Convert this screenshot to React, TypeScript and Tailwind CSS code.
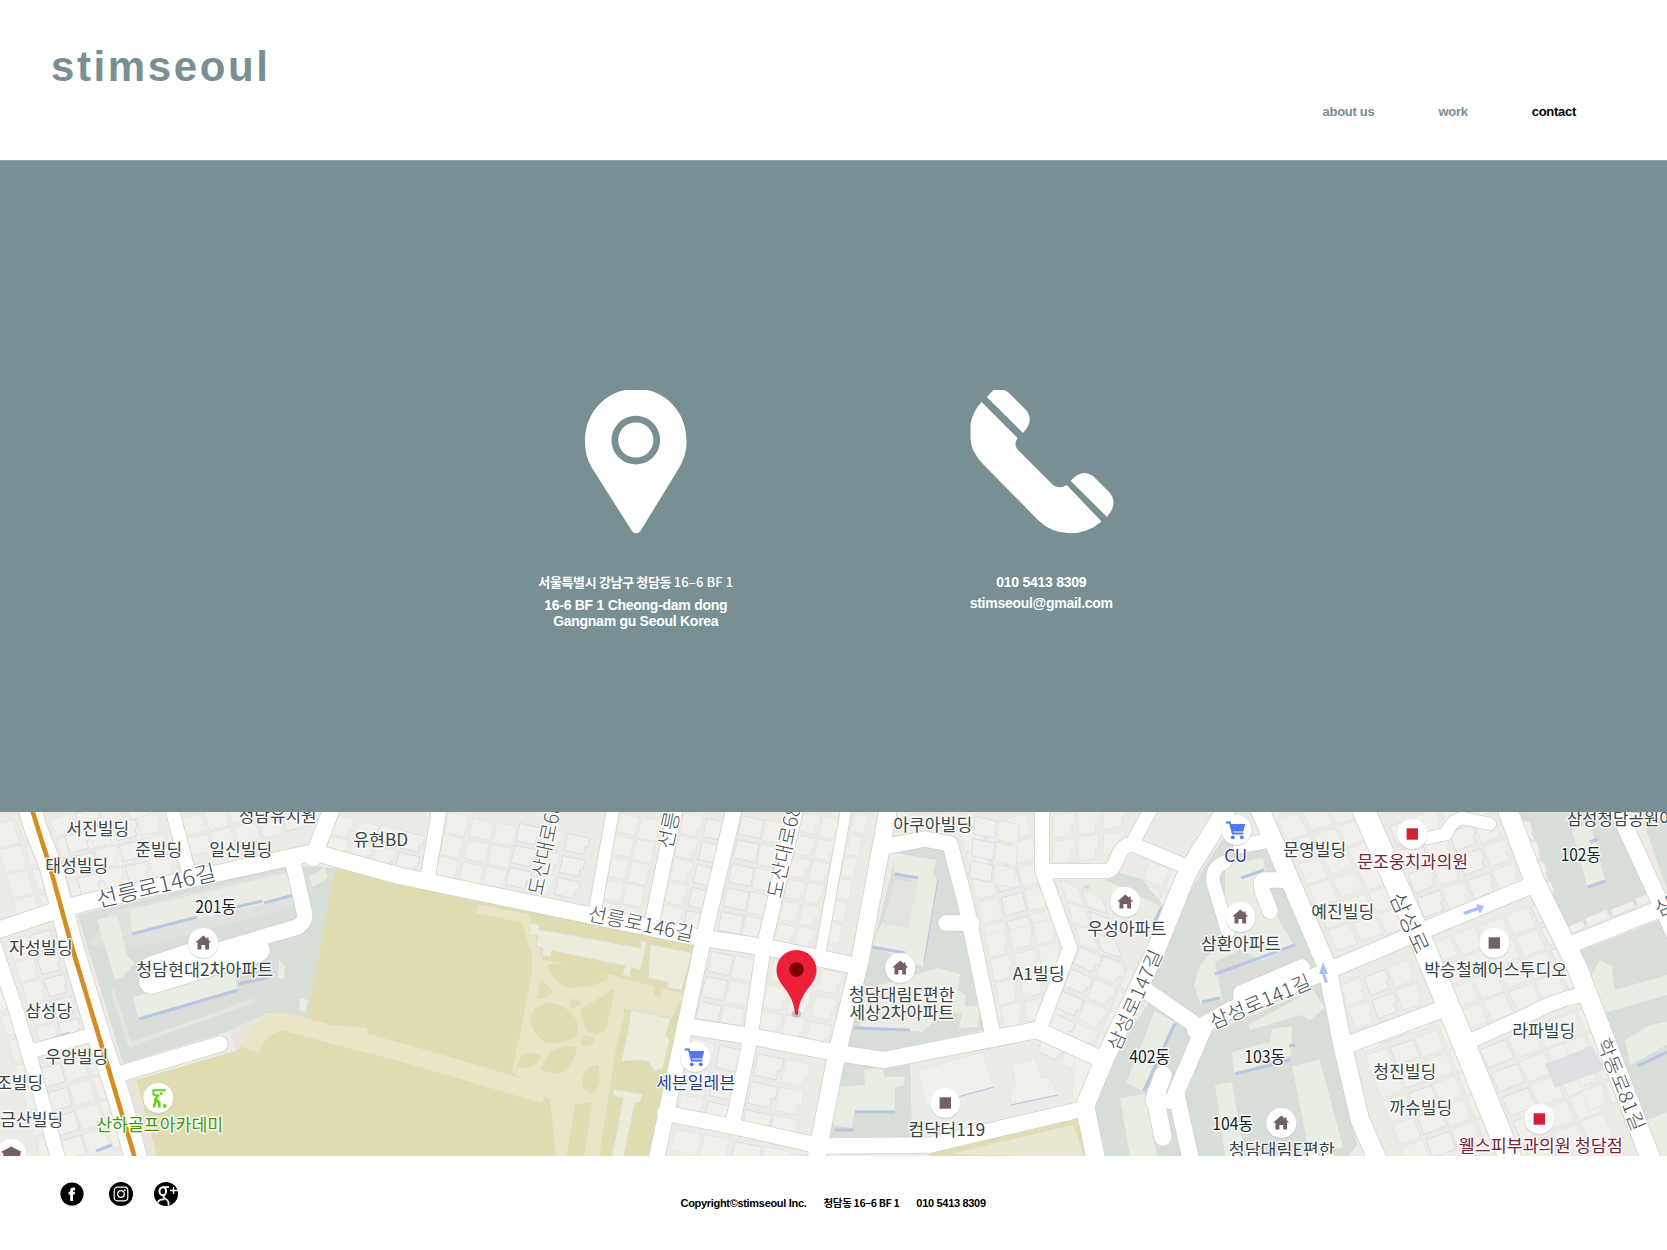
import React from 'react';

const SANS = 'font-["Liberation_Sans","Noto_Sans_CJK_KR",sans-serif]';

/* Road segments: path, width */
const roads: [string, number][] = [
  ['M27 800 L36 829 L51 867 L72 947 L100 1040 L120 1100 L138 1165', 22],
  ['M-5 931 L60 909 L100 899 L306 854 Q314 852 320 854 L400 876 L690 936 L770 948 L852 965', 16],
  ['M171 805 L188 870', 13],
  ['M333 805 L313 858', 16],
  ['M440 805 L428 876', 14],
  ['M614 805 L595 910', 12],
  ['M676 805 L652 922', 14],
  ['M735 805 L702 945 L683 1035 L655 1165', 15],
  ['M797 805 L763 950 L750 1040 L733 1122', 14],
  ['M847 805 L820 955', 10],
  ['M889 805 L860 960 L837 1053 L815 1165', 17],
  ['M685 1026 L750 1036 L837 1053 L884 1060 L1037 1030 L1103 1060', 16],
  ['M665 1113 L740 1128 L820 1146 L930 1145 L1087 1108', 15],
  ['M888 846 L925 839 L950 844 L966 905 L993 1036', 15],
  ['M946 923 L972 923', 15],
  ['M1042 805 L1042 870 L1070 948 L1040 1028', 14],
  ['M1045 871 L1108 871 Q1113 870 1117 859 Q1122 845 1132 844 L1187 867', 14],
  ['M1132 844 L1153 805', 13],
  ['M1229 805 L1187 873 L1153 957 L1105 1058 L1085 1106 L1097 1165', 18],
  ['M1148 992 L1203 1030 L1176 1093 L1192 1165', 16],
  ['M1163 1075 L1155 1097 L1163 1137', 17],
  ['M1153 1101 L1178 1101', 15],
  ['M1195 1030 L1230 1010 L1325 972 L1424 930 L1535 884', 16],
  ['M1258 805 L1327 967 L1343 1047 L1360 1120 L1382 1170', 18],
  ['M1359 800 L1424 947 L1457 1027 L1513 1165', 22],
  ['M1504 800 L1534 880 L1577 967 L1653 1165', 19],
  ['M1567 946 L1675 903', 16],
  ['M1613 800 L1675 935', 16],
  ['M1347 1045 L1440 1010', 16],
  ['M1468 1042 L1530 1014 Q1553 1001 1577 996', 14],
  ['M1225 862 Q1211 868 1213 882 L1228 932', 13],
  ['M1240 846 L1272 840', 14],
  ['M1284 880 L1264 880 Q1260 882 1262 890 L1270 911', 15],
  ['M1241 998 L1241 993 L1302 967', 15],
  ['M152 968 L206 950 M151 982 L258 950 M152 972 L210 962', 23],
  ['M206 954 L297 927 Q307 922 304 911 L292 858', 15],
  ['M112 1076 L220 1044', 15],
  ['M-6 945 L16 1010 L32 1065 L60 1165', 14],
  ['M28 1052 L95 1034', 13],
  ['M1428 838 L1446 834 Q1452 820 1462 818 L1490 824', 12],
];

const sandPaths = ['M250 1050 Q262 1021 285 1022 L400 1052 Q470 1072 545 1095', 'M282 1024 L367 1031', 'M477 909 L525 918 L537 955 L536 975 L520 1060', 'M540 963 L610 980 L690 1000', 'M612 978 L620 1015 L605 1070 L592 1165', 'M540 975 L560 1000 L610 985', 'M525 1040 L550 1000 L600 1050', 'M520 1066 L580 1038', 'M550 1065 L590 1020', 'M560 1165 L565 1090 L520 1075'];

const zones: string[] = [
  'M78 915 L290 866 L335 868 L307 1017 L267 1013 L233 1030 L123 1063 Z',
  'M897 852 L925 847 L947 852 L984 1030 L883 1052 L845 1046 L872 950 Z',
  'M840 1063 L910 1063 L912 1137 L827 1137 Z',
  'M1083 887 L1117 872 L1142 880 L1163 905 L1150 917 Z',
  'M1222 840 L1262 838 L1327 985 L1203 1022 L1135 985 L1163 935 Z',
  'M1110 1064 L1150 1000 L1205 1035 L1325 985 L1357 1145 L1345 1160 L1100 1160 L1093 1106 Z',
  'M1513 835 L1517 812 L1620 812 L1657 897 L1564 933 L1537 866 Z',
  'M1575 953 L1667 917 L1667 1160 L1643 1160 L1587 985 Z',
  'M1640 812 L1667 812 L1667 890 Z',
];

/* Apartment blocks */
const greens: string[] = [
  'M130 910 L290 872 L295 897 L132 933 Z', 'M97 920 L117 915 L128 957 L135 963 L123 977 L115 980 Z',
  'M133 997 L233 970 L238 990 L138 1018 Z', 'M279 960 L285 966 L284 979 L278 978 Z', 'M309 877 L325 867 L328 878 L312 887 Z', 'M300 998 L308 1000 L305 1012 L299 1010 Z',
  'M895 853 L937 860 L933 873 L938 880 L923 967 L872 947 L882 922 L905 927 L918 882 L894 873 Z',
  'M938 968 L960 974 L958 990 L966 995 L964 1015 L945 1010 L935 1020 L922 1032 L860 1026 L865 990 Z', 'M963 1007 L980 1005 L978 1027 L959 1028 Z',
  'M836 1087 L865 1085 L864 1070 L882 1068 L885 1077 L905 1077 L904 1085 L895 1088 L895 1113 L855 1110 L852 1128 L832 1125 Z',
  'M1090 880 L1100 877 L1162 907 L1153 925 L1088 893 Z',
  'M1225 865 L1263 858 L1270 905 L1295 947 L1262 960 L1240 950 L1215 962 L1222 1000 L1200 1003 L1194 985 L1200 965 L1225 935 Z',
  'M1155 1011 L1176 1023 L1142 1091 L1126 1083 Z', 'M1120 1098 L1145 1094 L1157 1156 L1130 1156 Z',
  'M1232 1052 L1270 1042 L1272 1029 L1292 1026 L1291 1055 L1234 1074 Z', 'M1292 1066 L1320 1060 L1343 1147 L1310 1156 Z', 'M1215 1085 L1232 1082 L1245 1156 L1225 1156 Z',
  'M1572 830 L1590 823 L1605 880 L1588 889 Z', 'M1248 1025 L1313 990 L1325 1008 L1310 1020 L1300 1015 L1250 1030 Z',
  'M1588 982 L1600 960 L1612 966 L1615 990 L1667 975 L1667 995 L1597 1015 Z', 'M1625 1040 L1650 1025 L1667 1022 L1667 1045 L1630 1065 Z', 'M1635 1125 L1667 1112 L1667 1156 L1645 1156 Z',
];

const blueLines: string[] = [
  'M132 934 L197 917 M237 907 L262 901 M264 903 L294 895', 'M139 1019 L238 990 M238 984 L270 977', 'M895 874 L918 878',
  'M872 947 L905 953', 'M855 1112 L895 1112', 'M854 1028 L910 1030', 'M1162 907 L1153 925', 'M1215 974 L1295 945 M1202 1002 L1220 998', 'M1175 1023 L1144 1091',
  'M1235 1074 L1290 1060 M1289 1046 L1295 1045', 'M1241 878 L1264 870', 'M1588 887 L1605 881 M1590 842 L1598 839', 'M835 1130 L854 1130', 'M1638 1066 L1667 1052', 'M50 1040 L70 1033', 'M96 1151 L112 1145',
];

/* Sports field structures */
const campus: string[] = [
  'M530 923 L540 925 L539 929 L641 948 L640 941 L647 942 L641 970 L631 968 L630 977 L622 975 L625 966 L552 951 L550 957 L542 955 L543 949 L536 946 L538 936 L529 935 Z',
  'M650 944 L692 953 L682 990 L668 988 L668 982 L648 978 Z',
  'M631 1010 L671 1018 L666 1035 L670 1040 L663 1068 L655 1072 L648 1062 L637 1060 L621 1062 L628 1030 Z',
  'M613 1089 L643 1094 L640 1103 L635 1103 L622 1165 L610 1165 L623 1098 L614 1096 Z',
];
const lawns: string[] = [
  'M547 965 Q565 960 610 977 Q600 987 570 988 Q555 985 547 965 Z', 'M540 980 Q546 982 553 992 Q545 1000 537 998 Z', 'M535 1008 Q550 998 565 1008 Q582 1020 577 1035 Q565 1046 545 1043 Q530 1030 530 1018 Z',
  'M580 1010 L615 988 L606 1030 Q595 1038 586 1030 Z', 'M520 1058 Q530 1048 541 1056 Q537 1070 516 1068 Z', 'M550 1052 Q565 1043 577 1048 Q572 1070 558 1074 L540 1070 Z', 'M582 1082 Q585 1065 598 1065 Q603 1085 592 1094 Q582 1092 582 1082 Z', 'M570 1000 Q577 997 581 1002 Q577 1010 570 1007 Z', 'M583 1036 Q590 1034 595 1040 Q590 1048 581 1045 Z', 'M575 1104 L592 1103 L583 1165 L565 1165 Z', 'M653 985 L661 987 L661 998 L654 995 Z',
];

/* Low-rise building rows: [x, y, column vector, row vector, columns, rows] */
const rows: [number, number, number, number, number, number, number, number][] = [
  [449, 812, 24, 5, -5, 22, 3, 3], [520, 822, 24, 5, -5, 22, 3, 4], [620, 812, 22, 5, -5, 22, 2, 5],
  [684, 812, 23, 5, -5, 23, 2, 5], [742, 814, 24, 5, -5, 24, 2, 5], [803, 812, 20, 4, -5, 22, 2, 6], [855, 812, 15, 3, -5, 22, 1, 6],
  [335, 815, 23, 5, -5, 21, 4, 3], [712, 950, 24, 5, -6, 25, 2, 3], [774, 958, 24, 5, -6, 26, 3, 3],
  [693, 1038, 27, 6, -6, 28, 2, 3], [758, 1052, 28, 6, -6, 28, 2, 3], [675, 1128, 30, 6, -6, 25, 5, 2],
  [50, 818, 25, -6, 6, 21, 4, 4], [-8, 825, 26, -6, 7, 25, 2, 4], [65, 835, 24, -6, 6, 21, 4, 3], [180, 818, 24, -6, 6, 20, 5, 2],
  [8, 940, 22, -6, 7, 22, 2, 5], [38, 1068, 24, -7, 7, 24, 3, 4], [-6, 990, 14, -4, 7, 25, 1, 7],
  [960, 830, 23, -6, 6, 24, 3, 5], [985, 935, 24, -6, 5, 24, 3, 4], [975, 815, 24, 5, -2, 22, 2, 3], [1053, 815, 25, -4, 0, 26, 3, 2],
  [1060, 880, 22, 8, 7, 22, 2, 4], [1080, 945, 24, 11, -9, 22, 3, 5], [1150, 860, 22, 9, -9, 22, 2, 2], [1145, 945, 20, 10, -8, 18, 2, 3],
  [1278, 820, 25, -8, 10, 22, 3, 6], [1390, 825, 25, -9, 9, 24, 4, 4],
  [1427, 945, 26, -10, 10, 22, 5, 4], [1340, 985, 24, -9, 8, 23, 3, 3], [1480, 1048, 28, -11, 11, 24, 3, 5],
  [1555, 1018, 22, -8, 9, 24, 2, 4], [1365, 1055, 25, -9, 9, 23, 4, 5], [1515, 818, 18, 5, 7, 20, 1, 4], [1560, 928, 25, -10, 4, 9, 4, 1],
];

function BuildingRow({ row, n }: { row: (typeof rows)[number]; n: number }) {
  const [x, y, ux, uy, vx, vy, cols, count] = row;
  const out = [];
  for (let r = 0; r < count; r++) {
    for (let c = 0; c < cols; c++) {
      const k = ((r * 7 + c * 11 + n * 5) % 7) / 7;
      const a = 0.82 + k * 0.12;
      const b = 0.93 - k * 0.2;
      const notch = 0.12 * (n % 2);
      const px = x + ux * c + vx * r;
      const py = y + uy * c + vy * r + k * 2;
      const d = `M${px} ${py} l${ux * a} ${uy * a} l${vx * b * 0.55} ${vy * b * 0.55} l${-ux * notch} ${-uy * notch} l${vx * b * 0.45} ${vy * b * 0.45} l${-ux * (a - notch)} ${-uy * (a - notch)} Z`;
      out.push(<path key={`${r}-${c}`} d={d} fill="#f1f0ea" stroke={k > 0.7 ? '#d2d9ea' : '#e3e4de'} strokeWidth="0.8" />);
    }
  }
  return <g>{out}</g>;
}

/* Labels: text, centre x, baseline y, width, colour, rotation, size */
const labels: [string, number, number, number, string?, number?, number?][] = [
  ['서진빌딩', 97, 834, 63], ['준빌딩', 158, 855, 47], ['일신빌딩', 240, 855, 63], ['청담유치원', 277, 821, 78], ['유현BD', 380, 845, 55],
  ['태성빌딩', 76, 871, 63], ['자성빌딩', 40, 953, 64], ['청담현대2차아파트', 204, 975, 137], ['삼성당', 48, 1016, 47],
  ['우암빌딩', 76, 1062, 63], ['조빌딩', 19, 1088, 47], ['금산빌딩', 31, 1125, 63], ['201동', 215, 912, 41, '#14201f'],
  ['산하골프아카데미', 159, 1130, 127, '#3d9a0c'], ['세븐일레븐', 695, 1088, 79, '#2b3f95'], ['아쿠아빌딩', 932, 830, 79], ['A1빌딩', 1038, 979, 52],
  ['청담대림E편한', 901, 1000, 106], ['세상2차아파트', 901, 1018, 105], ['컴닥터119', 946, 1135, 77], ['우성아파트', 1126, 934, 79],
  ['삼환아파트', 1240, 949, 80], ['CU', 1235, 861, 23, '#2b3f95'], ['문영빌딩', 1314, 855, 63], ['문조웅치과의원', 1412, 867, 111, '#74253d'],
  ['예진빌딩', 1342, 917, 63], ['박승철헤어스투디오', 1495, 975, 143], ['삼성청담공원아', 1620, 824, 108], ['102동', 1580, 860, 40, '#14201f'],
  ['라파빌딩', 1543, 1036, 63], ['청진빌딩', 1404, 1077, 63], ['까슈빌딩', 1420, 1113, 63], ['402동', 1149, 1062, 41, '#14201f'],
  ['103동', 1264, 1062, 41, '#14201f'], ['104동', 1232, 1129, 41, '#14201f'], ['청담대림E편한', 1281, 1155, 106], ['웰스피부과의원 청담점', 1540, 1151, 164, '#74253d'],
  ['선릉로146길', 157, 893, 122, '#465154', -13.5, 22], ['선릉로146길', 639, 930, 107, '#465154', 11.5, 20],
  ['도산대로68길', 553, 842, 112, '#465154', -78, 20], ['선릉로', 677, 823, 56, '#465154', -78, 20], ['도산대로68길', 792, 845, 112, '#465154', -78, 20],
  ['삼성로147길', 1140, 1003, 108, '#465154', -66, 19], ['삼성로141길', 1262, 1008, 108, '#465154', -23, 20],
  ['삼성로', 1403, 925, 65, '#465154', 65, 21], ['학동로81길', 1615, 1086, 98, '#465154', 68, 19], ['삼성로', 1684, 905, 58, '#465154', -23, 20],
];

function Label({ l }: { l: (typeof labels)[number] }) {
  const [t, x, y, w, color = '#344545', rot = 0, size = 17] = l;
  return (
    <text
      x={x + 0.7} y={y + 0.7} fontSize={size} fontWeight={rot ? 300 : 400} textAnchor="middle" textLength={w} lengthAdjust="spacingAndGlyphs" fill={color}
      stroke="#ffffff" strokeWidth="2.8" strokeOpacity="0.85" strokeLinejoin="round" paintOrder="stroke" transform={`rotate(${rot} ${x} ${y})`}
    >
      {t}
    </text>
  );
}

function Spot({ x, y, kind }: { x: number; y: number; kind: string }) {
  return (
    <g transform={`translate(${x} ${y})`}>
      <circle cy="1" r="15.3" fill="#b9bfc0" opacity="0.5" />
      <circle r="15" fill="#fff" />
      {kind === 'home' && <path d="M0 -7.5 L3.8 -4.200 V-5.500 H5.300 V-2.900 L8 -0.500 H5.800 V6.500 H1.900 V2 H-1.900 V6.500 H-5.800 V-0.500 H-8 Z" fill="#745f63" />}
      {kind === 'sq' && <rect x="-5.7" y="-5.7" width="11.4" height="11.4" fill="#745f63" />}
      {kind === 'red' && <rect x="-5.7" y="-5.7" width="11.4" height="11.4" fill="#d51f33" />}
      {kind === 'cart' && (
        <g>
          <path d="M-10.5 -7.5 H-6.5 L-3.5 3.5 H7" fill="none" stroke="#5277f5" strokeWidth="1.8" />
          <path d="M-6.5 -6 H9 L7 1.5 H-4.5 Z" fill="#5277f5" />
          <circle cx="-3.5" cy="7.3" r="1.9" fill="#5277f5" /><circle cx="5.5" cy="7.3" r="1.9" fill="#5277f5" />
        </g>
      )}
      {kind === 'golf' && (
        <g fill="none" stroke="#63d51c" strokeWidth="1.9">
          <path d="M7.5 -7.800 H-5 V-3.500 L-0.500 -2.500" />
          <path d="M0.500 -3.500 L-3 1.500 L1 4.500 V9.500 M-2.500 2 L-4.500 9.500" strokeWidth="2.6" />
          <circle cx="2.800" cy="-4.500" r="1.500" fill="#63d51c" stroke="none" /><circle cx="6.5" cy="8" r="1.9" fill="#63d51c" stroke="none" />
        </g>
      )}
      {kind === 'school' && <path d="M-10.500 -2 L0 -7.500 L10.500 -2 L0 3 Z M-8 -1 L0 3 L8 -1 V3 L0 7 L-8 3 Z M7.500 -1 h1.600 v7 h-1.600 z" fill="#745f63" />}
    </g>
  );
}

const spots: [number, number, string][] = [
  [203, 943, 'home'], [900, 968, 'home'], [1125, 902, 'home'], [1240, 917, 'home'], [1281, 1123, 'home'],
  [945, 1103, 'sq'], [1494, 943, 'sq'], [1412, 834, 'red'], [1539, 1119, 'red'], [695, 1057, 'cart'], [1236, 830, 'cart'], [158, 1098, 'golf'], [11, 1154, 'school'],
];

function StreetMap() {
  return (
    <svg className='block h-[344px] w-full shrink-0 font-["Noto_Sans_CJK_KR",sans-serif]' viewBox="0 812 1667 344" preserveAspectRatio="none">
      <rect x="0" y="812" width="1667" height="344" fill="#ecebe5" />
      {zones.map((d) => <path key={d} d={d} fill="#d7ddd7" />)}
      {rows.map((r, i) => <BuildingRow key={i} row={r} n={i} />)}
      {zones.slice(0, 6).map((d) => <path key={d} d={d} fill="#d7ddd7" />)}
      <path d="M90 945 L110 912 L290 868 L300 905 L150 945 Z" fill="#e3e6e0" opacity="0.6" />
      <path d="M112 990 L130 1045 L255 1000" fill="none" stroke="#e2e6e0" strokeWidth="4" />
      <path d="M335 868 L696 942 L650 1160 L155 1160 L135 1080 L236 1051 L268 1015 L307 1017 Z" fill="#dfdcb1" />
      <path d="M128 1080 L136 1078 L158 1160 L145 1160 Z M230 1030 L268 1013 L250 1040 L236 1051 Z" fill="#e9e5dc" />
      <g fill="none" stroke="#e8e4c8" strokeWidth="9">
        {sandPaths.map((d, i) => <path key={d} d={d} strokeWidth={i === 0 ? 18 : i === 1 ? 6 : 9} />)}
      </g>
      <path d="M535 965 L612 975 L680 1000 L672 1018 L622 1008 L598 1165 L557 1165 L550 1100 L512 1072 Z" fill="#e8e4c8" />
      {lawns.map((d) => <path key={d} d={d} fill="#dfdcb1" />)}
      {campus.map((d) => <path key={d} d={d} fill="#edebda" stroke="#d8dfd0" strokeWidth="1.2" />)}
      <path d="M930 1156 L1075 1122 L1088 1160 Z" fill="#e9e7d2" stroke="#dfdcb1" strokeWidth="5" />
      {greens.map((d) => <path key={d} d={d} fill="#e8eee2" />)}
      <path d="M885 915 L895 880 L918 882 L908 928 L884 925 Z" fill="#e2e5df" />
      <path d="M1545 1064 L1592 1046 L1605 1069 L1555 1088 Z" fill="#dddfe5" />
      <path d="M918 1070 L983 1052 L994 1087 L925 1105 Z M1012 1065 L1035 1058 L1041 1077 L1050 1079 L1058 1095 L1011 1105 L1010 1090 L1016 1085 Z M1075 1054 L1098 1066 L1082 1105 L1072 1100 Z" fill="#f1f0ea" stroke="#e3e3dd" strokeWidth="0.8" />
      <path d="M958 1097 L994 1087 M1011 1105 L1058 1095 M938 879 L924 962" fill="none" stroke="#b8c6e6" strokeWidth="1.2" />
      <g fill="none" stroke="#b8c6e6" strokeWidth="3.2">{blueLines.map((d) => <path key={d} d={d} />)}</g>
      <g fill="none" stroke="#cfd4c8" strokeLinecap="round" strokeLinejoin="round">{roads.map(([d, w]) => <path key={d} d={d} strokeWidth={w + 2} />)}</g>
      <g fill="none" stroke="#fff" strokeLinecap="round" strokeLinejoin="round">{roads.map(([d, w]) => <path key={d} d={d} strokeWidth={w + 0.4} />)}</g>
      <path d="M29 800 L50 867 L72 947 L100 1040 L137 1165" fill="none" stroke="#d28e20" strokeWidth="4.6" />
      <g fill="#a9c1fb">
        <path d="M1463 912 L1477 907 L1476 904 L1484 906 L1480 914 L1478 910 L1465 915 Z" />
        <path d="M1323 962 L1328 974 L1325 974 L1328 982 L1325 983 L1322 974 L1319 974 Z" />
      </g>
      {spots.map(([x, y, k]) => <Spot key={`${x}`} x={x + 0.3} y={y} kind={k} />)}
      {labels.map((l, i) => <Label key={i} l={l} />)}
      <ellipse cx="796.500" cy="1014" rx="5" ry="3.500" fill="#8ba0a4" opacity="0.5" />
      <path d="M796.500 950 A20 20 0 0 1 816.500 970 C816.500 986 799.500 990 798 1014 Q796.500 1016 795 1014 C793.500 990 776.500 986 776.500 970 A20 20 0 0 1 796.500 950 Z" fill="#ee2037" />
      <circle cx="796.500" cy="969.500" r="7.300" fill="#7b0000" />
    </svg>
  );
}

function PinIcon() {
  return (
    <svg className="h-[144px] w-[104px]" viewBox="584 390 104 144" fill="#fff">
      <path fillRule="evenodd" d="M625 390 H647 C670 395 686.500 415 686.500 441 C686.500 453 683 461 679 468 L640.500 531 Q636.300 535.500 632 531 L592 468 C588 461 585 453 585 441 C585 415 602 395 625 390 Z M635.800 415.800 a24.300 24.300 0 1 0 .01 0 Z" />
      <circle cx="635.800" cy="440" r="17.600" />
    </svg>
  );
}

function PhoneIcon() {
  return (
    <svg className="ml-px h-[144px] w-[144px]" viewBox="969 390 144 144" fill="#fff">
      <path d="M985.800 397 L992.500 390 H1003 Q1006 391 1008 393 L1023 408 Q1035 419 1022 433 Z" />
      <path d="M980.500 402 L1016.600 438 Q1012 444 1017 450 L1052 485 Q1058 489.500 1065.700 485 L1100.500 521.500 Q1087 533.300 1069 533.300 Q1050 533 1037 520 L982 464 Q969.500 451 969.500 438 V424 Q972 411 980.500 402 Z" />
      <path d="M1069.600 480.700 Q1081 468 1092 476 L1108 492 Q1118 503 1106 517 Z" />
    </svg>
  );
}

export default function App() {
  return (
    <div className={`flex h-[1250px] w-full flex-col overflow-hidden bg-white ${SANS}`}>
      <header className="flex h-40 shrink-0 justify-between pr-[91px] pl-[51px]">
        <h1 className="pt-[42.500px] text-[42px] leading-[48px] font-bold tracking-[2.600px] text-[#788f94]">stimseoul</h1>
        <nav className="flex items-start gap-[64px] pt-[103px] text-[13px] leading-[18px] font-bold tracking-[-0.280px] text-[#788f94]">
          <a>about us</a>
          <a>work</a>
          <a className="text-black">contact</a>
        </nav>
      </header>
      <main className="h-[652px] shrink-0 border-t border-[#93a5a9] bg-[#788f94] pt-[229px] pl-[433px] text-white">
        <div className="grid w-[811px] grid-cols-2 text-center text-[14px] leading-4 font-bold tracking-[-0.270px]">
          <section className="flex flex-col items-center">
            <PinIcon />
            <p className='mt-[39px] text-[13px] leading-[18px] font-bold tracking-[-0.350px] whitespace-nowrap font-["Noto_Sans_CJK_KR",sans-serif]'>서울특별시 강남구 청담동 <span className="font-medium tracking-[0.100px]">16–6 BF 1</span></p>
            <p className="mt-[6px] whitespace-nowrap">16-6 BF 1 Cheong-dam dong<br />Gangnam gu Seoul Korea</p>
          </section>
          <section className="flex flex-col items-center">
            <PhoneIcon />
            <p className="mt-[39px] leading-[18px]">010 5413 8309</p>
            <p className="mt-[3px] leading-[18px]">stimseoul@gmail.com</p>
          </section>
        </div>
      </main>
      <StreetMap />
      <footer className="flex h-[94px] shrink-0 items-start pl-[59px]">
        <div className="flex w-[621.500px] items-center pt-[26px] pl-[0.500px]">
          <svg className="size-6" viewBox="0 0 24 24"><circle cx="12" cy="12" r="11.600" /><path d="M10.200 19 V12.500 H8.500 V9.700 H10.200 V8.300 Q10.200 5.500 13 5.500 H15 V8.200 H13.800 Q13 8.200 13 9 V9.700 H15 L14.700 12.500 H13 V19 Z" fill="#fff" /></svg>
          <svg className="ml-[25px] size-6" viewBox="0 0 24 24"><circle cx="12" cy="12" r="12" /><rect x="5.200" y="5.200" width="13.600" height="13.600" rx="3.200" fill="none" stroke="#fff" strokeWidth="1.200" /><circle cx="12" cy="12" r="3.300" fill="none" stroke="#fff" strokeWidth="1.300" /><circle cx="15.800" cy="8.200" r="0.900" fill="#fff" /></svg>
          <svg className="ml-[21.500px] size-6" viewBox="0 0 24 24"><circle cx="12" cy="12" r="12" /><g fill="none" stroke="#fff"><ellipse cx="8.800" cy="9.300" rx="3.300" ry="4" strokeWidth="2" /><path d="M9 5.200 H15 M10.500 13 Q8.500 15 11 16.500 Q15.500 19 14.500 23.500" strokeWidth="1.800" /><path d="M10.500 17.500 Q5 17 3.800 20.500" strokeWidth="1.700" /><path d="M19.500 5 V12 M16 8.500 H23.500" strokeWidth="1.300" /></g></svg>
        </div>
        <div className="flex gap-[17px] pt-[39px] text-[11px] leading-4 font-bold tracking-[-0.310px] whitespace-nowrap text-black">
          <span>Copyright©stimseoul Inc.</span>
          <span className='text-[10.500px] font-["Noto_Sans_CJK_KR",sans-serif]'>청담동 16–6 BF 1</span>
          <span>010 5413 8309</span>
        </div>
      </footer>
    </div>
  );
}
